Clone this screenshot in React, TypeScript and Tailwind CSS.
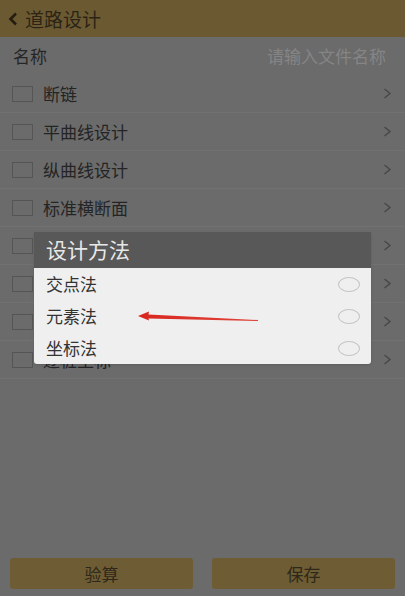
import React from "react";

// Road design form, shown with its "design method" picker open over a dimmed page.
const rows = ["断链", "平曲线设计", "纵曲线设计", "标准横断面", "超高设置", "加宽设置", "边坡设计", "逐桩坐标"];
const methods = ["交点法", "元素法", "坐标法"];

function Chevron() {
  return (
    <svg width="9" height="11" viewBox="0 0 9 11" className="shrink-0">
      <path d="M1.5 1 L7 5.5 L1.5 10" fill="none" stroke="#474747" strokeWidth="1.4" />
    </svg>
  );
}

export default function App() {
  return (
    <div
      className="relative flex h-[596px] w-[405px] flex-col overflow-hidden bg-[#6b6b6b]"
      style={{ fontFamily: '"Noto Sans CJK SC", "Noto Sans", sans-serif' }}
    >
      <header className="flex h-[37px] shrink-0 items-center bg-[#6b5a31] pl-[8px]">
        <svg width="10" height="14" viewBox="0 0 10 14">
          <path d="M8 1.5 L2.5 7 L8 12.5" fill="none" stroke="#241d10" strokeWidth="2.6" />
        </svg>
        <span className="ml-[7px] text-[19px] leading-none text-[#2b2416]">道路设计</span>
      </header>

      <div className="flex h-[38px] items-center justify-between pl-[13px] pr-[19px]">
        <span className="text-[17px] text-[#262626]">名称</span>
        <span className="text-[17px] text-[#858585]">请输入文件名称</span>
      </div>

      {rows.map((label) => (
        <div key={label} className="flex h-[38px] items-center border-b border-[#717171] pl-[12px] pr-[13px]">
          <span className="h-[16px] w-[21px] shrink-0 border border-[#555555]" />
          <span className="ml-[10px] flex-1 text-[17px] text-[#242424]">{label}</span>
          <Chevron />
        </div>
      ))}

      <div className="flex-1" />

      <div className="flex gap-[19px] px-[10px] pb-[7px]">
        <button className="h-[31px] flex-1 rounded-[3px] bg-[#6e5c34] text-[17px] text-[#2f2818]">验算</button>
        <button className="h-[31px] flex-1 rounded-[3px] bg-[#6e5c34] text-[17px] text-[#2f2818]">保存</button>
      </div>

      {/* modal picker */}
      <div className="absolute inset-0 flex items-center justify-center">
        <div className="w-[337px] overflow-hidden rounded-b-[3px] shadow-sm">
          <div className="flex h-[36px] items-center bg-[#585858] pl-[12px]">
            <span className="text-[21px] text-[#e8e8e8]">设计方法</span>
          </div>
          <div className="bg-[#efefef]">
            {methods.map((m) => (
              <div key={m} className="flex h-[32px] items-center justify-between pl-[12px] pr-[11px]">
                <span className="text-[17px] text-[#333333]">{m}</span>
                <span className="h-[15px] w-[22px] rounded-[50%] border border-[#c4c4c4]" />
              </div>
            ))}
          </div>
        </div>
      </div>

      {/* red annotation arrow */}
      <svg className="absolute left-[130px] top-[305px]" width="135" height="22" viewBox="0 0 135 22">
        <defs>
          <linearGradient id="arrowShade" x1="0" x2="1" y1="0" y2="0">
            <stop offset="0" stopColor="#d9261f" />
            <stop offset="1" stopColor="#e0443a" />
          </linearGradient>
        </defs>
        <path
          d="M8 11 L19 6.5 L18.5 9.5 L128 15 L128 16 L18.5 13.5 L19 15.5 Z"
          fill="url(#arrowShade)"
        />
      </svg>
    </div>
  );
}
